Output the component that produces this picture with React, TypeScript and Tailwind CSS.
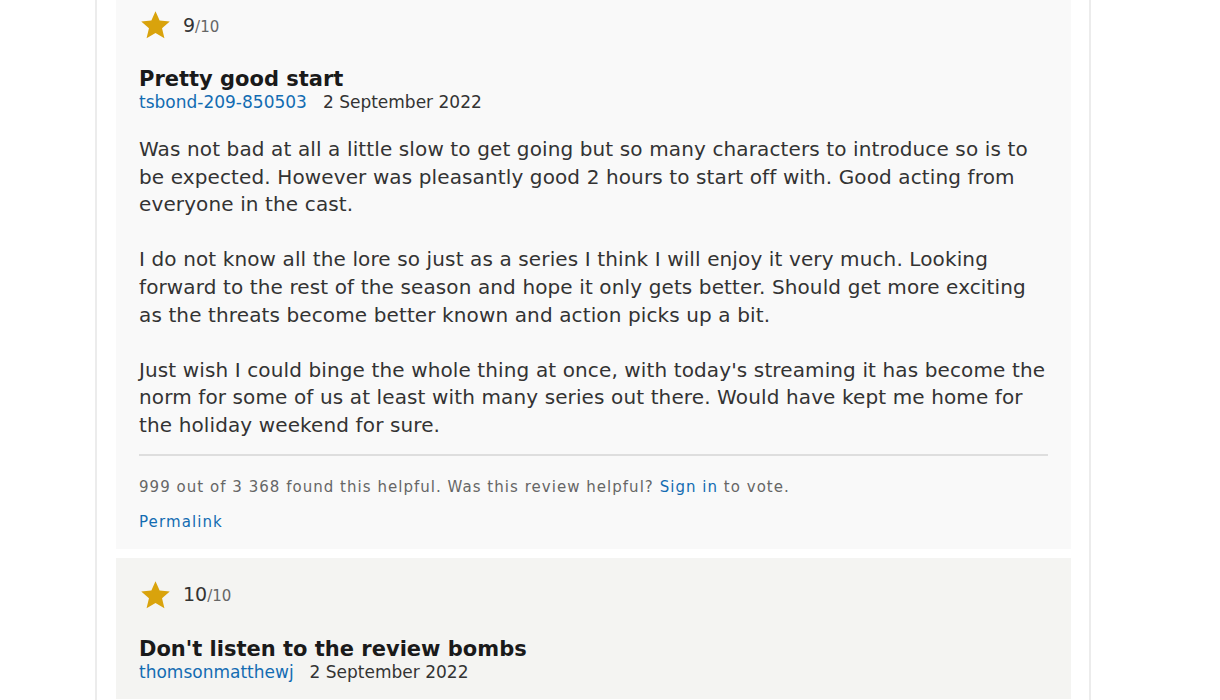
import React from "react";

interface Review {
  rating: number;
  title: string;
  author: string;
  date: string;
  paragraphs: string[];
  helpful?: string;
  bg: string;
}

const reviews: Review[] = [
  {
    rating: 9,
    title: "Pretty good start",
    author: "tsbond-209-850503",
    date: "2 September 2022",
    paragraphs: [
      "Was not bad at all a little slow to get going but so many characters to introduce so is to be expected. However was pleasantly good 2 hours to start off with. Good acting from everyone in the cast.",
      "I do not know all the lore so just as a series I think I will enjoy it very much. Looking forward to the rest of the season and hope it only gets better. Should get more exciting as the threats become better known and action picks up a bit.",
      "Just wish I could binge the whole thing at once, with today's streaming it has become the norm for some of us at least with many series out there. Would have kept me home for the holiday weekend for sure.",
    ],
    helpful: "999 out of 3 368 found this helpful.",
    bg: "bg-[#f9f9f9]",
  },
  {
    rating: 10,
    title: "Don't listen to the review bombs",
    author: "thomsonmatthewj",
    date: "2 September 2022",
    paragraphs: [],
    bg: "bg-[#f4f4f2]",
  },
];

const Star = () => (
  <svg width="33" height="32" viewBox="0 0 24 24" className="shrink-0">
    <path
      d="M12 1.6l3.1 7.1 7.6.7-5.8 5.1 1.8 7.5L12 18l-6.7 4 1.8-7.5-5.8-5.1 7.6-.7z"
      fill="#d9a30c"
    />
  </svg>
);

const ReviewCard = ({ review }: { review: Review }) => {
  return (
    <div className={`${review.bg} px-[23px] pt-[21px] pb-[17px]`}>
      <div className="flex items-center gap-[11px] h-[32px]">
        <Star />
        <span className="text-[19px] text-[#333]">
          {review.rating}
          <span className="text-[15px] text-[#666]">/10</span>
        </span>
      </div>
      <h2 className="mt-[25px] text-[21px] leading-[26px] font-bold text-[#1a1a1a]">
        {review.title}
      </h2>
      <div className="text-[17px] leading-[20px] text-[#333]">
        <a className="text-[#136cb2]">{review.author}</a>
        <span className="ml-[16px]">{review.date}</span>
      </div>
      {review.paragraphs.length > 0 && (
        <div className="mt-[24px] text-[20px] leading-[27.6px] tracking-[0.12px] text-[#333] flex flex-col gap-[27.6px]">
          {review.paragraphs.map((p, i) => (
            <p key={i}>{p}</p>
          ))}
        </div>
      )}
      {review.helpful && (
        <>
          <div className="mt-[14px] h-[2px] bg-[#dedede]" />
          <div className="mt-[21px] text-[15px] leading-[20px] tracking-[1.03px] text-[#666]">
            {review.helpful} Was this review helpful?{" "}
            <a className="text-[#136cb2]">Sign in</a> to vote.
          </div>
          <div className="mt-[15px] text-[15px] leading-[20px] tracking-[1.1px]">
            <a className="text-[#136cb2]">Permalink</a>
          </div>
        </>
      )}
    </div>
  );
};

const App = () => {
  return (
    <div
      className="min-h-[700px] bg-white overflow-hidden"
      style={{ fontFamily: '"DejaVu Sans", Verdana, sans-serif' }}
    >
      <div className="ml-[95px] w-[996px] min-h-[712px] -mt-[12px] border-x-2 border-[#ececec] pl-[19px] pr-[18px] flex flex-col gap-[9px]">
        {reviews.map((r, i) => (
          <ReviewCard key={i} review={r} />
        ))}
      </div>
    </div>
  );
};

export default App;
